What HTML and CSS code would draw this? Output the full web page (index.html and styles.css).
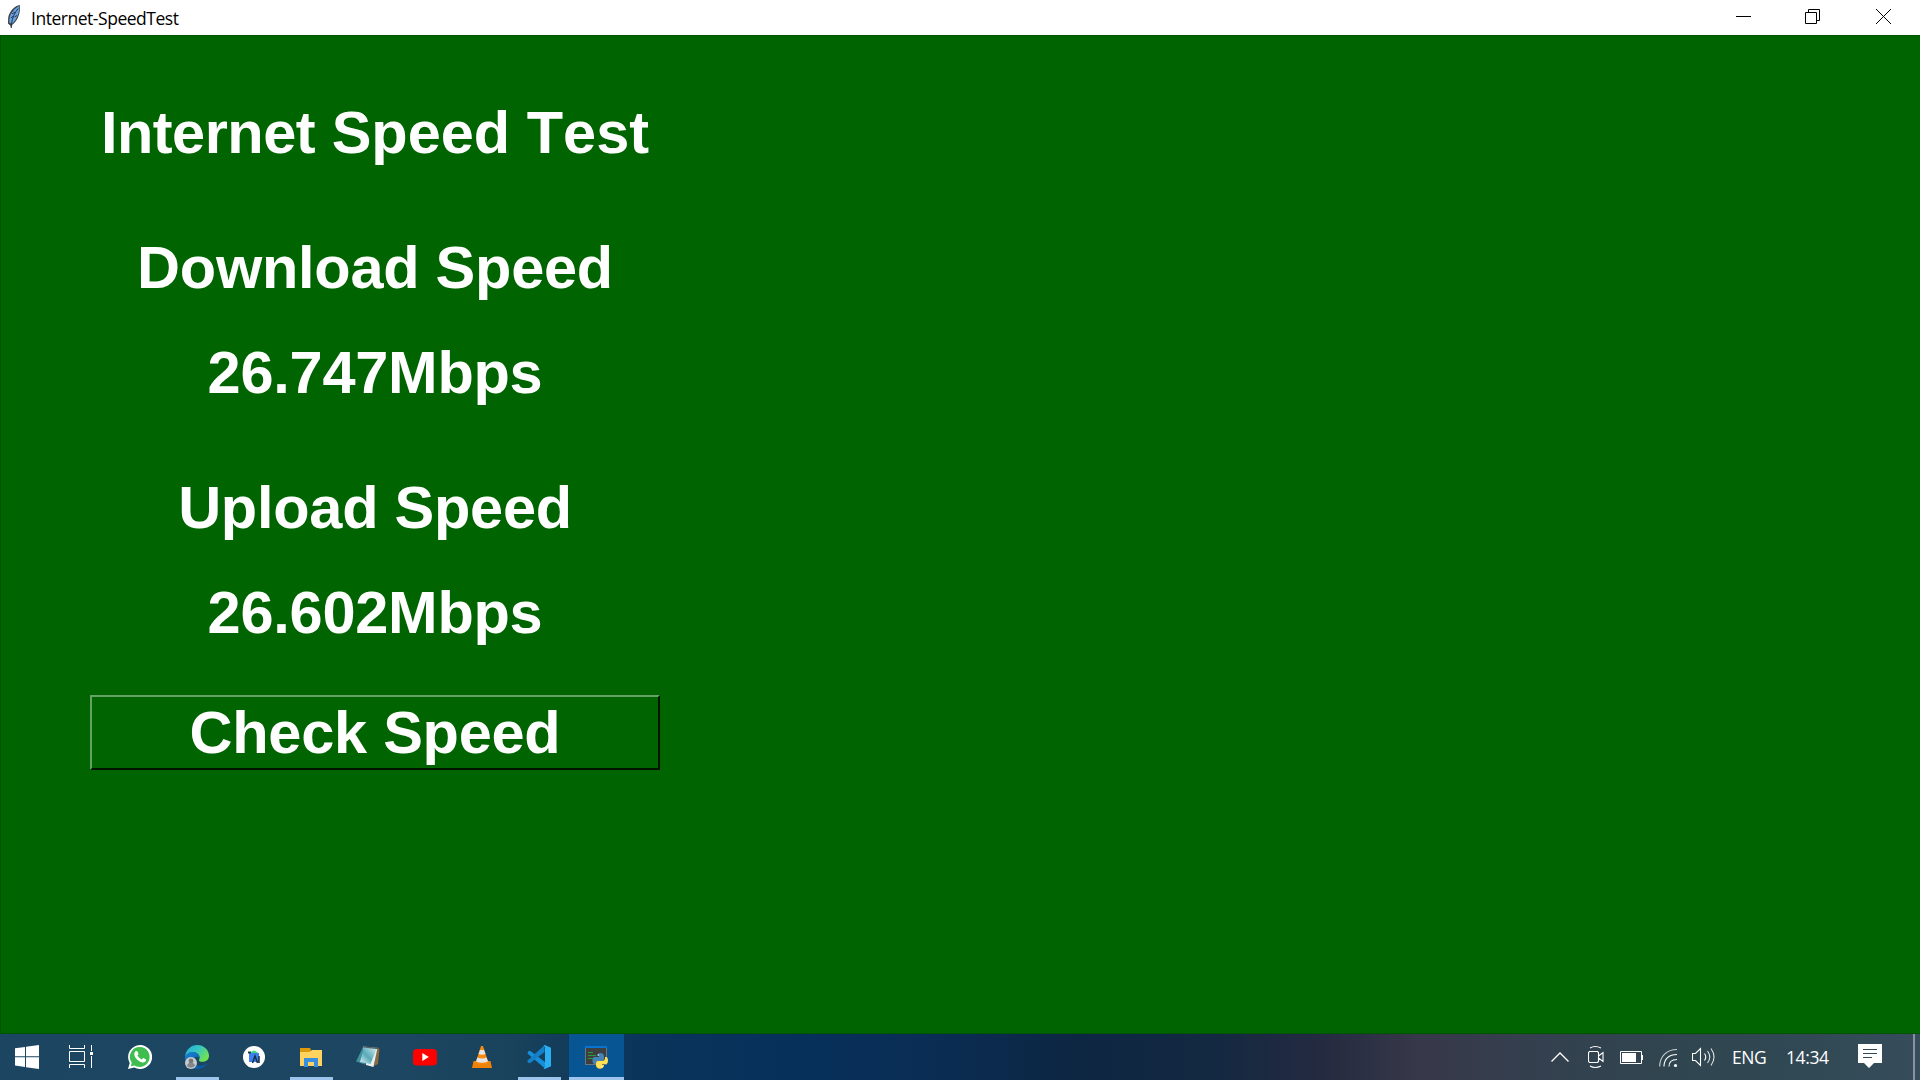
FILE: index.html
```html
<!DOCTYPE html>
<html lang="en">
<head>
<meta charset="utf-8">
<title>Internet-SpeedTest</title>
<link rel="stylesheet" href="styles.css">
</head>
<body>
<div class="screen">
  <header class="titlebar">
    <svg class="feather" width="14" height="26" viewBox="0 0 14 26">
      <path d="M12.800 1C8 1.500 2.500 7 1.200 13.500L1 19.500L3.500 21.800L4.200 24M4 21.500C9.500 19 14 10 12.800 1Z" fill="#3c4148"/>
      <path d="M12.200 2C8 4 3.500 9 2.500 14L2.300 18.500L4.500 20C9 17 12.800 9 12.200 2Z" fill="#6ba3e3"/>
      <path d="M11.200 4.500C7.500 9 5.600 13 4.400 20L4.200 24M8 8L5 10M6.500 12L3.800 14M7.500 13L10 11.500" stroke="#26384f" stroke-width="1" fill="none"/>
    </svg>
    <span class="caption">Internet-SpeedTest</span>
    <div class="controls">
      <svg width="70" height="35" viewBox="0 0 70 35"><path d="M27 16.500h15" stroke="#000"/></svg>
      <svg width="70" height="35" viewBox="0 0 70 35"><path d="M26.500 12.500h11v11h-11zM29.500 12.500v-3h11v11h-3" stroke="#000" fill="none"/></svg>
      <svg width="71" height="35" viewBox="0 0 71 35"><path d="M27 9l15 15M42 9l-15 15" stroke="#000" stroke-width="1"/></svg>
    </div>
  </header>

  <main class="client">
    <div class="panel">
      <h1 class="label heading"><span class="tight">Internet</span> Speed Test</h1>
      <h2 class="label">Download Speed</h2>
      <div class="label value">26.747Mbps</div>
      <h2 class="label">Upload Speed</h2>
      <div class="label value">26.602Mbps</div>
      <button class="check">Check Speed</button>
    </div>
  </main>

  <footer class="taskbar">
    <div class="apps">
      <div class="app start"><svg width="24" height="24" viewBox="0 0 24 24" fill="#fff"><path d="M0 3.300L10 2v9.300H0zM11 1.800L24 0v11.300H11zM0 12.300h10V22L0 20.600zM11 12.300h13V24L11 22.200z"/></svg></div>
      <div class="app tasks"><svg width="24" height="24" viewBox="0 0 24 24" fill="none" stroke="#fff"><path d="M.5 0v3.500h15V0M.5 6.500h15v10H.5zM.5 23v-3.500h15V23M22.500 0v6M22.500 11v12"/><path d="M21 7h3v3h-3z" fill="#fff" stroke="none"/></svg></div>
      <div class="app whatsapp"><svg width="24" height="24" viewBox="0 0 24 24"><path d="M12 0A12 12 0 1 1 6.300 22.500L0 24L1.700 18A12 12 0 0 1 12 0Z" fill="#fff"/><path d="M12 1.900A10 10 0 1 1 6.500 20.500L2.800 21.300L3.800 17.800A10 10 0 0 1 12 1.900Z" fill="#3fbd4f"/><path d="M7.600 6.300c.6-.6 1.500-.5 1.900.3l.9 2.100c.2.600-.7 1.300-.9 1.800 1 1.900 2.400 3.100 4.200 3.900.6-.2 1.100-1.400 1.700-1.400l2.300 1.200c.7.500.3 2-.6 2.600-3.400 2.500-10.800-2.900-10.800-7.500 0-1.200.6-2.300 1.300-3z" fill="#fff"/></svg></div>
      <div class="app edge active"><svg width="24" height="24" viewBox="0 0 24 24">
        <defs>
          <linearGradient id="edge-top" x1="0" y1="0" x2="1" y2=".6"><stop offset="0" stop-color="#24a9dd"/><stop offset=".5" stop-color="#35c5c5"/><stop offset="1" stop-color="#72e34f"/></linearGradient>
          <linearGradient id="edge-low" x1="0" y1="0" x2="1" y2="1"><stop offset="0" stop-color="#1683d4"/><stop offset="1" stop-color="#0a4f9e"/></linearGradient>
        </defs>
        <path d="M0 11.500C1 4.500 6 0 12.200 0C19 0 24 5 24 10.800C24 14.500 21.300 16.800 17.600 16.800C15 16.800 13 16 14.200 14.200C15.300 12.500 14.300 8.500 9.500 7.300C5.500 6.600 2 8.500 0 11.500Z" fill="url(#edge-top)"/>
        <path d="M0 11.500C2 7.800 6 6.300 10 7.400C13.500 8.500 14.800 11 14.400 13.400C12.500 10.500 8.800 11.800 8.800 15.200C8.900 19 13 22 18 20.500C20 19.700 21.200 19 22.500 18.300C20.200 22 16.500 24 12.500 24C5 24-.5 18.500 0 11.500Z" fill="url(#edge-low)"/>
        <circle cx="6" cy="18" r="6" fill="#c9cacc"/><circle cx="6" cy="15.900" r="2.400" fill="#74777b"/><path d="M2 21c0-4.200 8-4.200 8 0q-4 3.500-8 0" fill="#85878a"/></svg></div>
      <div class="app studio"><svg width="24" height="24" viewBox="0 0 24 24"><circle cx="12" cy="12" r="11" fill="#fff"/><path d="M8 8q4-5 8 0z" fill="#40d982"/><path d="M7 8h10v9H7z" fill="#3f80f0"/><path d="M6 7.500h3" stroke="#25374a" stroke-width="2"/><path d="M10.500 18l2.500-7 2.500 7M17 11v7" stroke="#173048" stroke-width="1.500" fill="none"/></svg></div>
      <div class="app folder active"><svg width="24" height="24" viewBox="0 0 24 24"><path d="M1 3h10l1 2-2 3H1z" fill="#df9a0c"/><path d="M1 7h9l3-2h10v16H1z" fill="#ffd35d"/><path d="M5 22v-9h14v9h-4v-5H9v5z" fill="#398fdf"/></svg></div>
      <div class="app notes"><svg width="24" height="24" viewBox="0 0 24 24"><defs><linearGradient id="note" x1="0" y1="1" x2="1" y2="0"><stop offset="0" stop-color="#dff3f6"/><stop offset=".45" stop-color="#57a9b7"/><stop offset="1" stop-color="#d6eef2"/></linearGradient></defs><path d="M21 2l2.500 2-1.500 15-4 2z" fill="#8b6a3b"/><path d="M7 1.500L21.500 3 17.500 22 10 20z" fill="#e9eff0"/><path d="M7 2L0 16.500l9 3z" fill="#438f9e"/><path d="M8 2l12.500 2-6 15L4 17z" fill="url(#note)"/><path d="M7 1.200l15 1.600v1.400L7 2.500z" fill="#53646a"/></svg></div>
      <div class="app tube"><svg width="24" height="24" viewBox="0 0 24 24"><rect y="4" width="24" height="16.500" rx="4" fill="#f00"/><path d="M9.300 8l6.500 4-6.500 4z" fill="#fff"/></svg></div>
      <div class="app cone"><svg width="24" height="24" viewBox="0 0 24 24"><path d="M3.500 16h17l1.500 7H2z" fill="#ee8208"/><path d="M11 1h2l5.500 17q-6.500 3-13 0z" fill="#f58a12"/><path d="M10 5h4l1.500 4q-3.500 1.500-7 0zM7.400 12.500q4.600 2 9.200 0l1.400 4q-6 2.500-12 0z" fill="#e5e5e5"/></svg></div>
      <div class="app code active"><svg width="24" height="24" viewBox="0 0 24 24"><path d="M1.300 6.200L3 5.800 18 17v6.500L.5 8.600z" fill="#168fda"/><path d="M.5 15.500L17.500.2V7L3 18.300 1.300 17.800.4 16.700z" fill="#1380c8"/><path d="M17.700 0L24 2.700v18.500L17.700 24l-1.200-.7 1.500-1.200V2L16.500.7z" fill="#2caff2"/></svg></div>
      <div class="app python active current"><svg width="24" height="24" viewBox="0 0 24 24"><path d="M0 1h22v19H0z" fill="#6e747a"/><path d="M0 1h22v2H0z" fill="#0874cf"/><path d="M1 3h20v16H1z" fill="#3d3f40"/><path d="M3 7.500h5M3 10.500h8M3 13.500h6" stroke="#289b35"/><path d="M12 11c0-4 7-4 7 0v3q0 2-2 2h-4q-2 0-2 3H9c-2-1-2-6 0-7h5v-1z" fill="#4584b6"/><path d="M20 12h1.500c2 1 2 6 0 7H17v1h2c0 5-8 5-8 0v-2q0-2 2-2h4q3 0 3-3z" fill="#ffe052"/><circle cx="13.500" cy="9.900" r=".7" fill="#fff"/><circle cx="17" cy="21.700" r=".7" fill="#fff"/></svg></div>
    </div>
    <div class="tray">
      <svg class="chevron" width="20" height="24" viewBox="0 0 20 24"><path d="M1.500 16.500L10 8l8.500 8.500" stroke="#fff" stroke-width="1.300" fill="none"/></svg>
      <svg class="meet" width="18" height="24" viewBox="0 0 18 24"><path d="M1.500 6.500h8l1 1v9l-1 1h-8l-1-1v-9zM10.500 11l4.500-3.500v9L10.500 13M2 3q5-3 11 0M2 21q5 3 11 0" stroke="#fff" stroke-width="1.100" fill="none"/></svg>
      <svg class="battery" width="24" height="24" viewBox="0 0 24 24"><path d="M.5 6.500h21v12H.5zM22.500 10v5" stroke="#fff" fill="none"/><path d="M2 8h14v9H2z" fill="#fff"/></svg>
      <svg class="wifi" width="20" height="24" viewBox="0 0 20 24"><g stroke="#fff" stroke-width="1.100" fill="none"><path d="M.7 21.500C.7 11 8 4.500 18 4.500" opacity=".75"/><path d="M5 21.500C5 14 10 9.500 18 9.500M10 21.500c0-4.500 3-7 8-7"/></g><circle cx="16.500" cy="20.500" r="1.600" fill="#fff"/></svg>
      <svg class="sound" width="24" height="24" viewBox="0 0 24 24"><g stroke="#fff" stroke-width="1.100" fill="none"><path d="M.5 8.500h3l5-5v17l-5-5h-3zM12.500 8.500q2.500 3.500 0 7"/><path d="M15.500 6q4.500 6 0 12M19 3.500q6 8.500 0 17" opacity=".85"/></g></svg>
      <span class="lang">ENG</span>
      <span class="clock">14:34</span>
      <svg class="note-center" width="24" height="26" viewBox="0 0 24 26"><path d="M0 0h24v19h-8l-5 5-5-5H0z" fill="#fff"/><path d="M5 5.500h14M5 9.500h14M5 13.500h9" stroke="#314955"/></svg>
      <span class="peek"></span>
    </div>
  </footer>
</div>
</body>
</html>
```
FILE: styles.css
```css
* { box-sizing: border-box; }
body { margin: 0; overflow: hidden; }
.screen { width: 1920px; height: 1080px; display: flex; flex-direction: column; }
svg { display: block; flex: none; }

.titlebar { height: 35px; flex: none; display: flex; align-items: flex-start; background: #fff; padding-left: 7px; }
.feather { margin-top: 4px; }
.caption { margin: 6px 0 0 10px; font: 17.5px/25px "Open Sans", sans-serif; letter-spacing: -0.47px; color: #000; white-space: nowrap; }
.controls { display: flex; margin-left: auto; }

.client { flex: 1; background: #006400; border: 1px solid #005300; border-right-width: 0; padding: 63px 0 0 89px; }
.panel { width: 570px; display: flex; flex-direction: column; }
.label { margin: 0; height: 68px; text-align: center; font: bold 59.5px/68px "Liberation Sans", Arial, sans-serif; letter-spacing: -0.25px; color: #fff; white-space: nowrap; }
.heading { letter-spacing: 0; font-kerning: none; }
.tight { letter-spacing: -0.5px; }
h2.label { margin-top: 67px; }
.value { margin-top: 37px; }
.check { height: 75px; margin-top: 48px; padding: 0; background: #006400; border: 2px solid; border-color: #66a266 #001400 #001400 #66a266; font: bold 59.5px/68px "Liberation Sans", Arial, sans-serif; letter-spacing: -0.25px; color: #fff; }

.taskbar { height: 46px; flex: none; display: flex; justify-content: space-between; background: linear-gradient(90deg, #1b4560 0, #1c4661 400px, #19425c 510px, #0b345b 640px, #06305a 800px, #0a2d55 920px, #0d2642 1080px, #142941 1220px, #242a40 1320px, #373849 1420px, #34404f 1540px, #30454f 1660px, #304853 1780px, #364c5b 1920px); }
.apps { display: flex; }
.app { width: 57px; display: flex; justify-content: center; padding: 11px 2px 0 0; border-bottom: 3px solid transparent; }
.app.start, .app.tasks { width: 54px; padding-right: 0; }
.app.whatsapp { width: 63px; padding-right: 0; }
.app.edge { width: 43px; margin: 0 7px 0 5px; }
.app.folder, .app.code { width: 43px; margin: 0 7px; }
.app.active { border-bottom-color: #9dc4ed; }
.app.current { width: 55px; padding-right: 0; background: #075593; margin-left: 1px; }

.tray { display: flex; align-items: center; color: #fff; font: 17.5px/24px "Open Sans", sans-serif; }
.meet { margin-left: 18px; }
.battery { margin-left: 14px; }
.wifi { margin-left: 15px; }
.sound { margin-left: 13px; }
.lang { width: 35px; margin-left: 16px; letter-spacing: -0.5px; }
.clock { width: 44px; margin-left: 19px; letter-spacing: -0.4px; }
.note-center { margin: 0 31px 0 28px; }
.peek { width: 7px; align-self: stretch; border-left: 2px solid #88939d; }
```
